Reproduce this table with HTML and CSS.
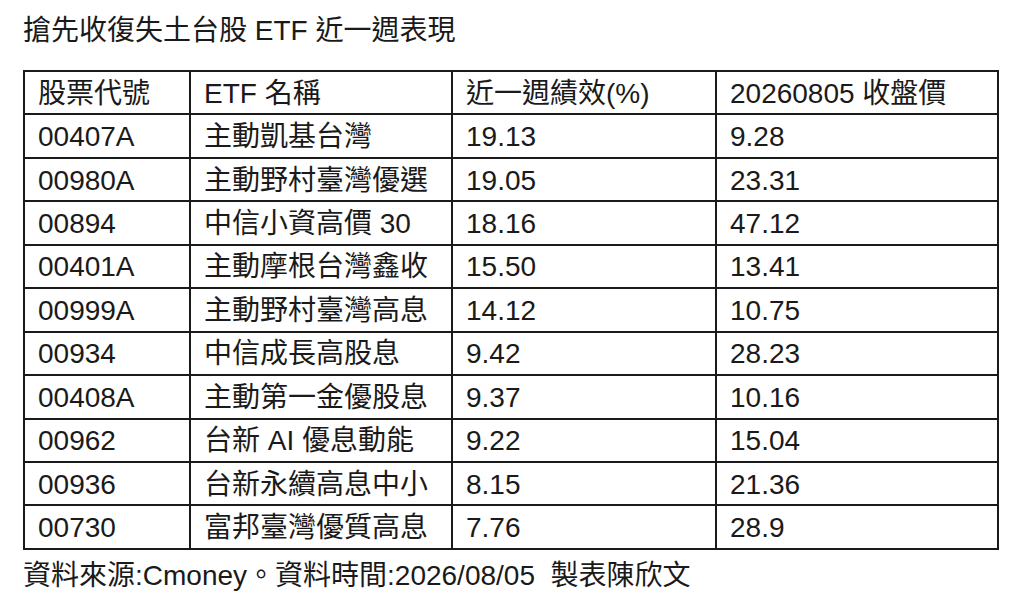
FILE: index.html
```html
<!DOCTYPE html>
<html lang="zh-Hant">
<head>
<meta charset="utf-8">
<title>搶先收復失土台股 ETF 近一週表現</title>
<link rel="stylesheet" href="styles.css">
</head>
<body>
<div class="page">
  <h1 class="title">搶先收復失土台股 ETF 近一週表現</h1>
  <table class="etf">
    <colgroup>
      <col class="c1"><col class="c2"><col class="c3"><col class="c4">
    </colgroup>
    <thead>
      <tr><th>股票代號</th><th>ETF 名稱</th><th>近一週績效(%)</th><th>20260805 收盤價</th></tr>
    </thead>
    <tbody>
      <tr><td>00407A</td><td>主動凱基台灣</td><td>19.13</td><td>9.28</td></tr>
      <tr><td>00980A</td><td>主動野村臺灣優選</td><td>19.05</td><td>23.31</td></tr>
      <tr><td>00894</td><td>中信小資高價 30</td><td>18.16</td><td>47.12</td></tr>
      <tr><td>00401A</td><td>主動摩根台灣鑫收</td><td>15.50</td><td>13.41</td></tr>
      <tr><td>00999A</td><td>主動野村臺灣高息</td><td>14.12</td><td>10.75</td></tr>
      <tr><td>00934</td><td>中信成長高股息</td><td>9.42</td><td>28.23</td></tr>
      <tr><td>00408A</td><td>主動第一金優股息</td><td>9.37</td><td>10.16</td></tr>
      <tr><td>00962</td><td>台新 AI 優息動能</td><td>9.22</td><td>15.04</td></tr>
      <tr><td>00936</td><td>台新永續高息中小</td><td>8.15</td><td>21.36</td></tr>
      <tr><td>00730</td><td>富邦臺灣優質高息</td><td>7.76</td><td>28.9</td></tr>
    </tbody>
  </table>
  <p class="note">資料來源:Cmoney。資料時間:2026/08/05&nbsp; 製表陳欣文</p>
</div>
</body>
</html>
```

FILE: styles.css
```css
html, body {
  margin: 0;
  padding: 0;
  background: #ffffff;
}

body {
  font-family: "Liberation Sans", "Noto Sans CJK TC", sans-serif;
  color: #1a1a1a;
  font-size: 28px;
}

.page {
  padding: 14px 0 0 23px;
}

.title {
  margin: 0;
  font-size: 28px;
  font-weight: 400;
  line-height: 34px;
}

.etf {
  margin-top: 22px;
  border-collapse: collapse;
  table-layout: fixed;
  width: 974px;
}

.c1 { width: 166px; }
.c2 { width: 262px; }
.c3 { width: 264px; }
.c4 { width: 282px; }

.etf th,
.etf td {
  border: 2px solid #1a1a1a;
  height: 39.45px;
  padding: 2px 0 0 13px;
  text-align: left;
  font-weight: 400;
  line-height: 30px;
  white-space: nowrap;
  vertical-align: middle;
}

.note {
  margin: 9px 0 0 0;
  font-size: 28px;
  line-height: 34px;
}
```
